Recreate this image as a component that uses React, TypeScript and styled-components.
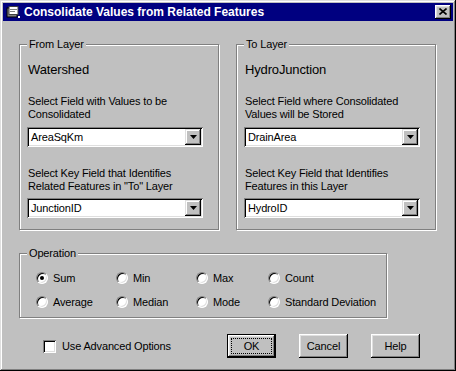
import styled, { createGlobalStyle } from "styled-components"

const GlobalStyle = createGlobalStyle`
  html, body { margin: 0; padding: 0; background: #c0c0c0; }
  body {
    font-family: "Liberation Sans", Arial, sans-serif;
    font-size: 11px;
    letter-spacing: -0.15px;
    color: #000;
  }
  * { box-sizing: border-box; }
`

const fromLayer = {
    title: "From Layer",
    name: "Watershed",
    first: ["Select Field with Values to be", "Consolidated"],
    firstValue: "AreaSqKm",
    second: ["Select Key Field that Identifies", "Related Features in \"To\" Layer"],
    secondValue: "JunctionID",
}

const toLayer = {
    title: "To Layer",
    name: "HydroJunction",
    first: ["Select Field where Consolidated", "Values will be Stored"],
    firstValue: "DrainArea",
    second: ["Select Key Field that Identifies", "Features in this Layer"],
    secondValue: "HydroID",
}

const operations = [
    "Sum", "Min", "Max", "Count",
    "Average", "Median", "Mode", "Standard Deviation",
]

const Window = styled.div`
  width: 456px;
  height: 371px;
  padding: 3px;
  background: #c0c0c0;
  box-shadow: inset -1px -1px #000, inset 1px 1px #dfdfdf,
    inset -2px -2px #808080, inset 2px 2px #fff;
  display: flex;
  flex-direction: column;
`

const TitleBar = styled.div`
  height: 18px;
  background: #000080;
  display: flex;
  align-items: center;
  padding: 0 2px;
`

const TitleText = styled.span`
  margin-left: 3px;
  color: #fff;
  font-weight: bold;
  font-size: 12px;
  letter-spacing: 0;
  white-space: nowrap;
`

const CloseButton = styled.div`
  margin-left: auto;
  width: 16px;
  height: 14px;
  background: #c0c0c0;
  box-shadow: inset -1px -1px #000, inset 1px 1px #fff,
    inset -2px -2px #808080, inset 2px 2px #dfdfdf;
  display: flex;
  align-items: center;
  justify-content: center;
  padding: 0 1px 1px 0;
`

const Body = styled.div`
  padding: 23px 17px 0 16px;
  display: flex;
  flex-direction: column;
`

const Columns = styled.div`
  display: flex;
  gap: 17px;
`

const GroupBox = styled.div`
  position: relative;
  border: 1px solid #808080;
  box-shadow: inset 1px 1px #fff, 1px 1px #fff;
`

const LayerGroup = styled(GroupBox)`
  width: 200px;
  height: 186px;
  padding: 17px 7px 0 7px;
`

const Caption = styled.span`
  position: absolute;
  top: -7px;
  left: 7px;
  padding: 0 2px;
  line-height: 13px;
  background: #c0c0c0;
  white-space: nowrap;
`

const LayerName = styled.div`
  font-size: 13px;
  line-height: 16px;
  padding-left: 1px;
`

const FieldLabel = styled.div<{ $top: number }>`
  margin-top: ${p => p.$top}px;
  line-height: 13px;
  padding-left: 1px;
  white-space: nowrap;
`

const Combo = styled.div<{ $top: number }>`
  margin-top: ${p => p.$top}px;
  width: 176px;
  height: 20px;
  background: #fff;
  padding: 2px;
  display: flex;
  align-items: center;
  box-shadow: inset 1px 1px #808080, inset -1px -1px #fff,
    inset 2px 2px #000, inset -2px -2px #dfdfdf;
`

const ComboValue = styled.span`
  flex: 1;
  padding-left: 2px;
`

const ArrowButton = styled.div`
  width: 16px;
  height: 16px;
  background: #c0c0c0;
  box-shadow: inset -1px -1px #000, inset 1px 1px #dfdfdf,
    inset -2px -2px #808080, inset 2px 2px #fff;
  display: flex;
  align-items: center;
  justify-content: center;
`

const OperationGroup = styled(GroupBox)`
  margin-top: 23px;
  width: 368px;
  height: 65px;
  padding: 16px 0 0 16px;
  display: grid;
  grid-template-columns: 80px 80px 72px auto;
  grid-auto-rows: 16px;
  row-gap: 8px;
`

const RadioItem = styled.label`
  display: flex;
  align-items: center;
  gap: 5px;
  white-space: nowrap;
`

const Radio = styled.span<{ $checked?: boolean }>`
  position: relative;
  flex: none;
  width: 12px;
  height: 12px;
  border-radius: 50%;
  background: #fff;
  border: 1px solid;
  border-color: #808080 #fff #fff #808080;
  box-shadow: inset 1px 1px #000, inset -1px -1px #dfdfdf;
  &::after {
    content: "";
    display: ${p => (p.$checked ? "block" : "none")};
    position: absolute;
    left: 3px;
    top: 3px;
    width: 4px;
    height: 4px;
    border-radius: 50%;
    background: #000;
  }
`

const BottomRow = styled.div`
  margin-top: 16px;
  height: 24px;
  display: flex;
  align-items: center;
  padding-left: 24px;
`

const CheckItem = styled.label`
  display: flex;
  align-items: center;
  gap: 6px;
`

const CheckBox = styled.span`
  width: 13px;
  height: 13px;
  background: #fff;
  box-shadow: inset 1px 1px #808080, inset -1px -1px #fff,
    inset 2px 2px #000, inset -2px -2px #dfdfdf;
`

const Buttons = styled.div`
  margin-left: auto;
  padding-right: 16px;
  display: flex;
  gap: 23px;
`

const Button = styled.div<{ $default?: boolean }>`
  position: relative;
  width: 49px;
  height: 24px;
  display: flex;
  align-items: center;
  justify-content: center;
  background: #c0c0c0;
  border: ${p => (p.$default ? "1px solid #000" : "none")};
  box-shadow: inset -1px -1px #000, inset 1px 1px #fff,
    inset -2px -2px #808080, inset 2px 2px #dfdfdf;
  &::after {
    content: "";
    display: ${p => (p.$default ? "block" : "none")};
    position: absolute;
    inset: 3px;
    border: 1px dotted #000;
  }
`

const AppIcon = () => (
    <svg width="16" height="16" viewBox="0 0 16 16">
        <rect x="2" y="4" width="10" height="9" fill="#808080" stroke="#000" strokeWidth="1" />
        <rect x="4" y="2.5" width="9" height="8" fill="#fff" stroke="#404040" strokeWidth="1" />
        <rect x="5" y="5" width="7" height="1" fill="#808080" />
        <rect x="5" y="7" width="5" height="1" fill="#808080" />
        <rect x="13" y="12" width="2" height="2" fill="#fff" />
    </svg>
)

const CloseGlyph = () => (
    <svg width="8" height="7" viewBox="0 0 8 7">
        <path d="M0.5 0.5L7.5 6.5M7.5 0.5L0.5 6.5" stroke="#000" strokeWidth="1.6" />
    </svg>
)

const DownArrow = () => (
    <svg width="7" height="4" viewBox="0 0 7 4">
        <path d="M0 0h7L3.5 4z" fill="#000" />
    </svg>
)

type Layer = typeof fromLayer

const LayerBox = ({ layer }: { layer: Layer }) => (
    <LayerGroup>
        <Caption>{layer.title}</Caption>
        <LayerName>{layer.name}</LayerName>
        <FieldLabel $top={17}>{layer.first[0]}<br />{layer.first[1]}</FieldLabel>
        <Combo $top={6}>
            <ComboValue>{layer.firstValue}</ComboValue>
            <ArrowButton><DownArrow /></ArrowButton>
        </Combo>
        <FieldLabel $top={20}>{layer.second[0]}<br />{layer.second[1]}</FieldLabel>
        <Combo $top={5}>
            <ComboValue>{layer.secondValue}</ComboValue>
            <ArrowButton><DownArrow /></ArrowButton>
        </Combo>
    </LayerGroup>
)

const App = () => {
    return (
        <>
            <GlobalStyle />
            <Window>
                <TitleBar>
                    <AppIcon />
                    <TitleText>Consolidate Values from Related Features</TitleText>
                    <CloseButton><CloseGlyph /></CloseButton>
                </TitleBar>
                <Body>
                    <Columns>
                        <LayerBox layer={fromLayer} />
                        <LayerBox layer={toLayer} />
                    </Columns>
                    <OperationGroup>
                        <Caption>Operation</Caption>
                        {operations.map((op, index) =>
                            <RadioItem key={op}>
                                <Radio $checked={index === 0} />
                                {op}
                            </RadioItem>
                        )}
                    </OperationGroup>
                    <BottomRow>
                        <CheckItem>
                            <CheckBox />
                            Use Advanced Options
                        </CheckItem>
                        <Buttons>
                            <Button $default>OK</Button>
                            <Button>Cancel</Button>
                            <Button>Help</Button>
                        </Buttons>
                    </BottomRow>
                </Body>
            </Window>
        </>
    )
}

export default App
